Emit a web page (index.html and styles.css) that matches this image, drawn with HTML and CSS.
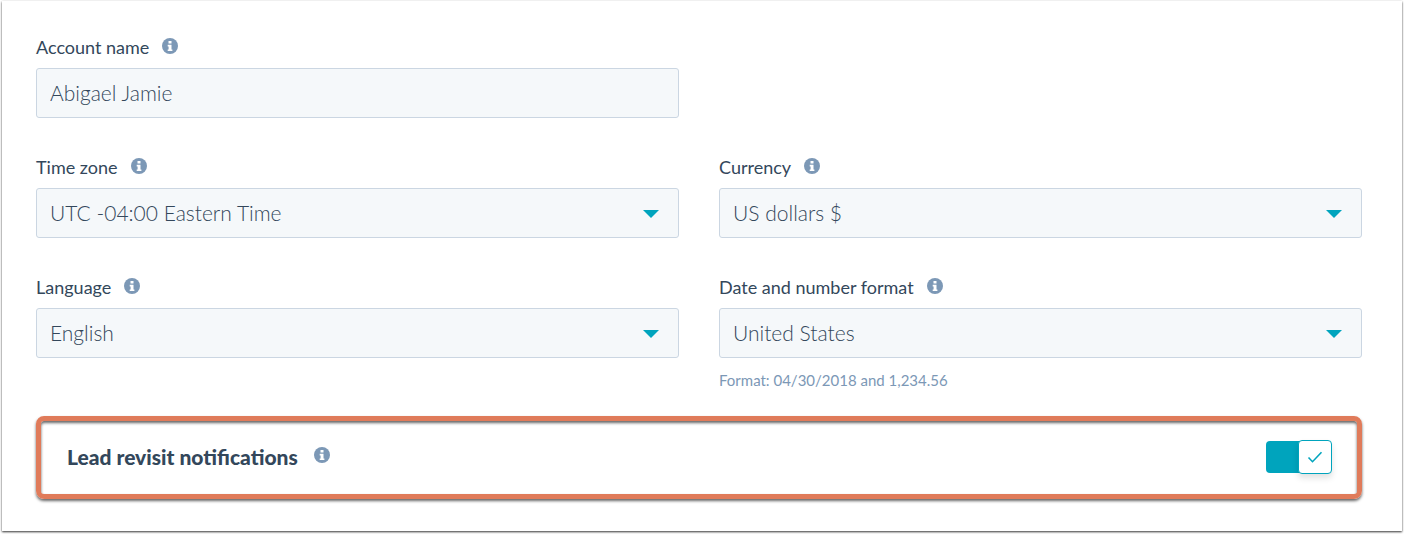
FILE: index.html
```html
<!DOCTYPE html>
<html lang="en">
  <head>
    <meta charset="UTF-8" />
    <meta name="viewport" content="width=device-width, initial-scale=1.0" />
    <title>Account Defaults</title>
    <link rel="stylesheet" href="styles.css">
  </head>
  <body>
    <svg class="sprite" aria-hidden="true">
      <symbol id="info" viewBox="0 0 16 16">
        <circle cx="8" cy="8" r="8" fill="#7c98b6" />
        <path d="M6.5 3h3v2.5h-3zM5.7 6.8h3.8v4.6h.9V13H5.7v-1.6h.9V8.4h-.9z" fill="#fff" />
      </symbol>
    </svg>

    <main class="panel">
      <form class="settings">
        <div class="fields">
          <div class="field">
            <div class="field-label">
              <label for="accountName">Account name</label>
              <svg class="info"><use href="#info" /></svg>
            </div>
            <input id="accountName" class="control" type="text" value="Abigael Jamie" />
          </div>

          <div class="field field-first">
            <div class="field-label">
              <label for="timeZone">Time zone</label>
              <svg class="info"><use href="#info" /></svg>
            </div>
            <div class="select">
              <select id="timeZone" class="control">
                <option>UTC -04:00 Eastern Time</option>
              </select>
            </div>
          </div>

          <div class="field">
            <div class="field-label">
              <label for="currency">Currency</label>
              <svg class="info"><use href="#info" /></svg>
            </div>
            <div class="select">
              <select id="currency" class="control">
                <option>US dollars $</option>
              </select>
            </div>
          </div>

          <div class="field">
            <div class="field-label">
              <label for="language">Language</label>
              <svg class="info"><use href="#info" /></svg>
            </div>
            <div class="select">
              <select id="language" class="control">
                <option>English</option>
              </select>
            </div>
          </div>

          <div class="field">
            <div class="field-label">
              <label for="format">Date and number format</label>
              <svg class="info"><use href="#info" /></svg>
            </div>
            <div class="select">
              <select id="format" class="control">
                <option>United States</option>
              </select>
            </div>
            <p class="hint">Format: 04/30/2018 and 1,234.56</p>
          </div>
        </div>

        <div class="callout">
          <div class="callout-label">
            <label for="leadRevisit">Lead revisit notifications</label>
            <svg class="info"><use href="#info" /></svg>
          </div>
          <div class="toggle">
            <input id="leadRevisit" type="checkbox" checked />
            <span class="knob">
              <svg viewBox="0 0 16 16" fill="none" stroke="#00a4bd" stroke-width="1.6">
                <path d="M1.5 8.5l4 4.2 9-9.4" />
              </svg>
            </span>
          </div>
        </div>
      </form>
    </main>
  </body>
</html>
```

FILE: styles.css
```css
* {
  box-sizing: border-box;
}

body {
  margin: 0;
  padding: 1px 2px 3px;
  font-family: Lato, 'Open Sans', sans-serif;
  color: #33475b;
  background-color: #fff;
}

.sprite {
  display: none;
}

.panel {
  padding: 34px 40px 32px 34px;
  background-color: #fff;
  box-shadow: 0 1px 2px rgba(0, 0, 0, 0.8);
}

.fields {
  display: grid;
  grid-template-columns: 1fr 1fr;
  gap: 37px 40px;
}

.field-first {
  grid-column: 1;
}

.field-label {
  display: flex;
  align-items: center;
  gap: 13px;
  height: 24px;
  margin-bottom: 9px;
  font-size: 18px;
  line-height: 24px;
}

.info {
  width: 16px;
  height: 16px;
  margin-bottom: 2px;
}

.control {
  display: block;
  width: 100%;
  height: 50px;
  padding: 0 13px 2px;
  border: 1px solid #cbd6e2;
  border-radius: 3px;
  background-color: #f5f8fa;
  font-family: inherit;
  font-size: 21px;
  font-weight: 300;
  color: #33475b;
  appearance: none;
}

.control:focus {
  outline: none;
  border-color: #00a4bd;
}

.select {
  position: relative;
}

.select::after {
  content: '';
  position: absolute;
  top: 22px;
  right: 20px;
  border: 8px solid transparent;
  border-top-color: #00a4bd;
  border-bottom: 0;
  pointer-events: none;
}

.hint {
  margin: 11px 0 0;
  font-size: 15px;
  line-height: 22px;
  color: #7c98b6;
}

.callout {
  display: flex;
  align-items: center;
  justify-content: space-between;
  height: 83px;
  margin-top: 25px;
  padding: 0 25px 1px 26px;
  border: 5px solid #e07b5a;
  border-radius: 8px;
  box-shadow: 0 2px 3px rgba(0, 0, 0, 0.6), inset 0 2px 3px rgba(0, 0, 0, 0.6);
}

.callout-label {
  display: flex;
  align-items: center;
  gap: 16px;
  padding-bottom: 2px;
  font-size: 21px;
  font-weight: 900;
}

.toggle {
  position: relative;
  width: 66px;
  height: 32px;
}

.toggle input {
  display: block;
  width: 64px;
  height: 32px;
  margin: 0;
  border-radius: 4px;
  background-color: #00a4bd;
  appearance: none;
  cursor: pointer;
}

.knob {
  position: absolute;
  top: -1px;
  right: 0;
  display: flex;
  align-items: center;
  justify-content: center;
  width: 34px;
  height: 34px;
  border: 1px solid #00a4bd;
  border-radius: 4px;
  background-color: #fff;
  box-shadow: 0 4px 6px rgba(0, 0, 0, 0.12);
  pointer-events: none;
}

.knob svg {
  width: 16px;
  height: 16px;
}

.toggle input:not(:checked) + .knob {
  right: 32px;
}
```
